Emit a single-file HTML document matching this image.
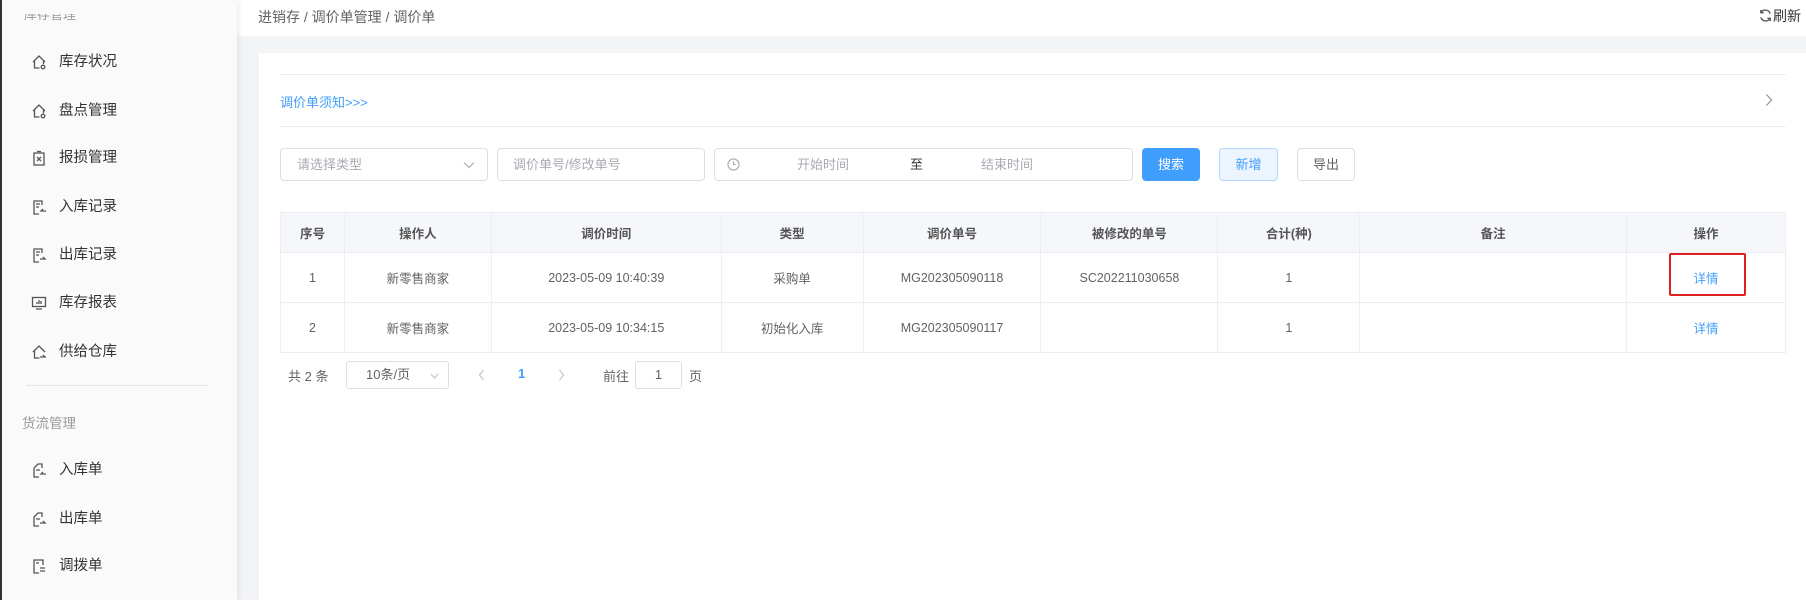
<!DOCTYPE html>
<html><head><meta charset="utf-8"><style>
*{margin:0;padding:0;box-sizing:border-box}
body{width:1806px;height:600px;overflow:hidden;background:#f3f4f6;font-family:"Liberation Sans","Noto Sans CJK SC",sans-serif;position:relative;color:#606266}
.a{position:absolute}
#side{left:0;top:0;width:237px;height:600px;background:#fafafa;border-left:2px solid #333;box-shadow:2px 0 6px rgba(0,0,0,.08);z-index:2}
.mi{position:absolute;left:0;height:24px;font-size:14.5px;color:#333;line-height:24px}
.mi svg{position:absolute;left:29px;top:4px}
.mi span{position:absolute;left:57px;white-space:nowrap}
#hdr{left:237px;top:0;width:1569px;height:36px;background:#fff}
#card{left:259px;top:53px;width:1547px;height:547px;background:#fff}
.ln{position:absolute;height:1px;background:#ebeef5}
.inp{position:absolute;border:1px solid #dcdfe6;border-radius:4px;height:33px;top:148px;font-size:13px;color:#a8abb2;line-height:31px;background:#fff}
.btn{position:absolute;top:148px;height:33px;border-radius:4px;font-size:13px;line-height:31px;text-align:center}
table{position:absolute;left:280px;top:212px;width:1506px;border-collapse:collapse;font-size:12.5px;color:#606266}
td,th{border:1px solid #ebeef5;text-align:center;height:50px;font-weight:normal}
th{background:#f5f7fa;height:40px;color:#555;font-weight:600;font-size:12.5px}
tr.r td{height:50px}
</style></head><body>
<div id="side" class="a">
<div class="a" style="left:22px;top:14px;height:8px;overflow:hidden;width:80px"><div style="margin-top:-7px;font-size:13px;color:#999;line-height:16px">库存管理</div></div>
<div class="mi" style="top:50px"><svg width="16" height="16" viewBox="0 0 16 16" fill="none" stroke="#555" stroke-width="1.3"><path d="M2 8L8 2l6 6M3.5 7v7h5M12.5 7v3"/><circle cx="12" cy="13" r="1.8"/></svg><span>库存状况</span></div>
<div class="mi" style="top:99px"><svg width="16" height="16" viewBox="0 0 16 16" fill="none" stroke="#555" stroke-width="1.3"><path d="M2 8L8 2l6 6M3.5 7v7h5M12.5 7v3"/><circle cx="12" cy="13" r="1.8"/></svg><span>盘点管理</span></div>
<div class="mi" style="top:146px"><svg width="16" height="16" viewBox="0 0 16 16" fill="none" stroke="#555" stroke-width="1.3"><rect x="3" y="3" width="10" height="12"/><path d="M6 1.5h4M6 7l4 4M10 7l-4 4"/></svg><span>报损管理</span></div>
<div class="mi" style="top:195px"><svg width="16" height="16" viewBox="0 0 16 16" fill="none" stroke="#555" stroke-width="1.3"><path d="M11 6V2H3v13h5M5 5h4M5 8h3M15 12h-5l2-2"/></svg><span>入库记录</span></div>
<div class="mi" style="top:243px"><svg width="16" height="16" viewBox="0 0 16 16" fill="none" stroke="#555" stroke-width="1.3"><path d="M11 6V2H3v13h5M5 5h4M5 8h3M9 12h5l-2-2"/></svg><span>出库记录</span></div>
<div class="mi" style="top:291px"><svg width="16" height="16" viewBox="0 0 16 16" fill="none" stroke="#555" stroke-width="1.3"><rect x="1.5" y="2.5" width="13" height="9"/><path d="M5 14h6M6 9V7M8 9V5M10 9V6"/></svg><span>库存报表</span></div>
<div class="mi" style="top:340px"><svg width="16" height="16" viewBox="0 0 16 16" fill="none" stroke="#555" stroke-width="1.3"><path d="M2 8L8 2l6 6M3.5 7v7h5M9 13h5l-2-2"/></svg><span>供给仓库</span></div>
<div class="a" style="left:24px;top:385px;width:183px;height:1px;background:#e6e6e6"></div>
<div class="a" style="left:20px;top:412px;font-size:13.5px;color:#999">货流管理</div>
<div class="mi" style="top:458px"><svg width="16" height="16" viewBox="0 0 16 16" fill="none" stroke="#555" stroke-width="1.3"><path d="M3 6l4-4h4v4M3 6v9h5M5 8h4M15 12h-5l2-2"/></svg><span>入库单</span></div>
<div class="mi" style="top:507px"><svg width="16" height="16" viewBox="0 0 16 16" fill="none" stroke="#555" stroke-width="1.3"><path d="M3 6l4-4h4v4M3 6v9h5M5 8h4M9 12h5l-2-2"/></svg><span>出库单</span></div>
<div class="mi" style="top:554px"><svg width="16" height="16" viewBox="0 0 16 16" fill="none" stroke="#555" stroke-width="1.3"><path d="M12 7V2H3v13h5M5 5h3M9 10h5M14 13H9"/></svg><span>调拨单</span></div>
</div>
<div id="hdr" class="a">
<div class="a" style="left:21px;top:7px;font-size:14px;color:#606266">进销存 / 调价单管理 / 调价单</div>
<div class="a" style="left:1521px;top:6px;font-size:14px;color:#333"><svg width="15" height="15" viewBox="0 0 16 16" fill="none" stroke="#555" stroke-width="1.4" style="vertical-align:-2px"><path d="M13 6A5.5 5.5 0 0 0 3 5M3 10a5.5 5.5 0 0 0 10 1M3 2v3h3M13 14v-3h-3"/></svg>刷新</div>
</div>
<div id="card" class="a"></div>
<div class="ln" style="left:280px;top:74px;width:1506px"></div>
<div class="ln" style="left:280px;top:126px;width:1506px"></div>
<div class="a" style="left:280px;top:92px;font-size:13px;color:#409eff">调价单须知&gt;&gt;&gt;</div>
<svg class="a" style="left:1765px;top:93px" width="8" height="14" viewBox="0 0 8 14" fill="none" stroke="#909399" stroke-width="1.2"><path d="M1.5 1.5l5 5.5-5 5.5"/></svg>
<div class="inp" style="left:280px;width:208px;padding-left:16px">请选择类型<svg class="a" style="right:12px;top:12px" width="12" height="8" viewBox="0 0 12 8" fill="none" stroke="#a8abb2" stroke-width="1.2"><path d="M1 1.5l5 5 5-5"/></svg></div>
<div class="inp" style="left:497px;width:208px;padding-left:15px">调价单号/修改单号</div>
<div class="inp" style="left:714px;width:419px"><svg class="a" style="left:12px;top:9px" width="13" height="13" viewBox="0 0 14 14" fill="none" stroke="#a8abb2" stroke-width="1.2"><circle cx="7" cy="7" r="6"/><path d="M7 3.5V7h2.5"/></svg><span class="a" style="left:82px">开始时间</span><span class="a" style="left:195px;color:#303133">至</span><span class="a" style="left:266px">结束时间</span></div>
<div class="btn" style="left:1142px;width:58px;background:#409eff;color:#fff;border:1px solid #409eff">搜索</div>
<div class="btn" style="left:1219px;width:59px;background:#ecf5ff;color:#409eff;border:1px solid #b3d8ff">新增</div>
<div class="btn" style="left:1297px;width:58px;background:#fff;color:#606266;border:1px solid #dcdfe6">导出</div>
<table>
<colgroup><col style="width:64px"><col style="width:147px"><col style="width:230px"><col style="width:142px"><col style="width:178px"><col style="width:177px"><col style="width:142px"><col style="width:267px"><col style="width:159px"></colgroup>
<tr><th>序号</th><th>操作人</th><th>调价时间</th><th>类型</th><th>调价单号</th><th>被修改的单号</th><th>合计(种)</th><th>备注</th><th>操作</th></tr>
<tr class="r"><td>1</td><td>新零售商家</td><td>2023-05-09 10:40:39</td><td>采购单</td><td>MG202305090118</td><td>SC202211030658</td><td>1</td><td></td><td style="color:#409eff">详情</td></tr>
<tr class="r"><td>2</td><td>新零售商家</td><td>2023-05-09 10:34:15</td><td>初始化入库</td><td>MG202305090117</td><td></td><td>1</td><td></td><td style="color:#409eff">详情</td></tr>
</table>
<div class="a" style="left:1669px;top:253px;width:77px;height:43px;border:2px solid #e02020;border-radius:2px"></div>
<div class="a" style="left:288px;top:366px;font-size:13px;color:#606266">共 2 条</div>
<div class="a" style="left:346px;top:361px;width:103px;height:28px;border:1px solid #dcdfe6;border-radius:3px;font-size:13px;line-height:26px;padding-left:19px;color:#606266">10条/页<svg class="a" style="right:9px;top:11px" width="9" height="6" viewBox="0 0 9 6" fill="none" stroke="#c0c4cc" stroke-width="1.1"><path d="M1 1l3.5 4L8 1"/></svg></div>
<svg class="a" style="left:478px;top:369px" width="7" height="12" viewBox="0 0 7 12" fill="none" stroke="#c0c4cc" stroke-width="1.2"><path d="M5.5 1L1.5 6l4 5"/></svg>
<div class="a" style="left:518px;top:366px;font-size:13px;color:#409eff;font-weight:bold">1</div>
<svg class="a" style="left:558px;top:369px" width="7" height="12" viewBox="0 0 7 12" fill="none" stroke="#c0c4cc" stroke-width="1.2"><path d="M1.5 1l4 5-4 5"/></svg>
<div class="a" style="left:603px;top:366px;font-size:13px">前往</div>
<div class="a" style="left:635px;top:361px;width:47px;height:28px;border:1px solid #dcdfe6;border-radius:3px;font-size:13px;line-height:26px;text-align:center">1</div>
<div class="a" style="left:689px;top:366px;font-size:13px">页</div>
</body></html>
